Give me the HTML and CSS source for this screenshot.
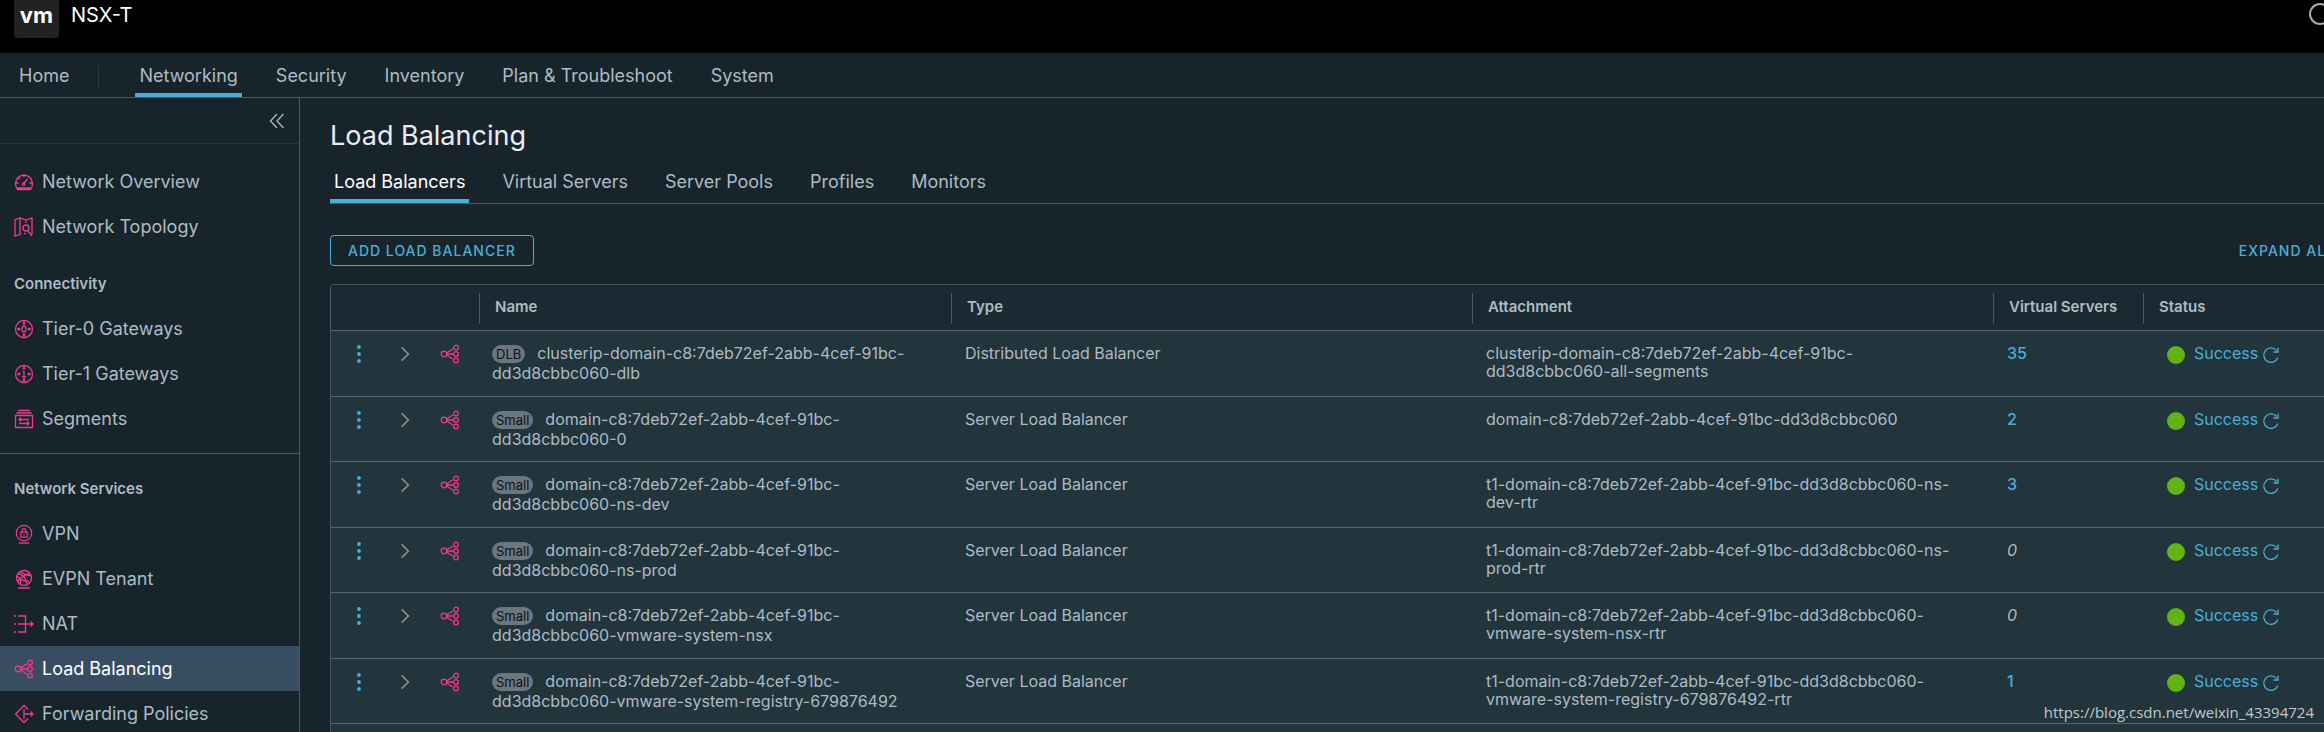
FILE: index.html
```
<!DOCTYPE html>
<html lang="en">
<head>
	<meta charset="UTF-8">
	<title>NSX-T</title>
	<link rel="stylesheet" href="styles.css">
</head>
<body>
	<svg class="sprite" aria-hidden="true">
		<symbol id="i-overview" viewBox="0 0 20 20"><path d="M3.500 17.500C0 13 1 4 10 3c9 1 10 10 6.500 14.500zM3.500 16h13M10 3v2.500M2 11h2.500M15.500 11H18M4.500 5.700l1.500 1.500M9.500 12l4-5"/><circle cx="9.500" cy="12" r="1.200"/></symbol>
		<symbol id="i-topology" viewBox="0 0 20 20"><path d="M7 17l-6 2V3l5-2 6 2 6-2v16M6 1v4M6 5v12M12 3v3M14 14l4 5M12 17l-2-1"/><circle cx="12" cy="11" r="3"/></symbol>
		<symbol id="i-tier0" viewBox="0 0 20 20"><circle cx="10" cy="10" r="8.500"/><ellipse cx="10" cy="10" rx="2" ry="3"/><path d="M10 2v3M8.700 3.700L10 5l1.300-1.300M10 18v-3M8.700 16.300L10 15l1.300 1.300M3 10h3M4.500 8.700L6 10l-1.500 1.300M17 10h-3M15.500 8.700L14 10l1.500 1.300"/></symbol>
		<symbol id="i-tier1" viewBox="0 0 20 20"><circle cx="10" cy="10" r="8.500"/><path d="M8.500 7.500H10V13M8 13h4M10 2v3M8.700 3.700L10 5l1.300-1.300M10 18v-3M8.700 16.300L10 15l1.300 1.300M3 10h3M4.500 8.700L6 10l-1.500 1.300M17 10h-3M15.500 8.700L14 10l1.500 1.300"/></symbol>
		<symbol id="i-segments" viewBox="0 0 20 20"><path d="M4 1.500h12M2.500 4h15M1.500 6.500h17v12h-17zM15 10.500H5M7 8.500l-2 2 2 2M5 14.500h10M13 12.500l2 2-2 2"/></symbol>
		<symbol id="i-vpn" viewBox="0 0 20 22"><circle cx="10" cy="10" r="8.500"/><path d="M6.500 9h7v5.500h-7zM8 9V7a2 2 0 0 1 4 0v2M10 11v1.500M4 21h12"/></symbol>
		<symbol id="i-evpn" viewBox="0 0 20 20"><circle cx="10" cy="9" r="7.500"/><path d="M4.500 4.500C8 5 12 9 13.500 15.500M15.500 4.500C12 5 6 9 3.500 12.500M7 2.500c2 2.500 5 4 10 4M3 7c2 2 7 6 12 5M7 8l-1 8M4 19h12"/></symbol>
		<symbol id="i-nat" viewBox="0 0 20 20"><path d="M4 2h7.500v16H4M4 10h15M16.500 7.500L19 10l-2.500 2.500M0 2h2M0 10h2M0 18h2"/></symbol>
		<symbol id="i-lb" viewBox="0 0 20 20"><circle cx="4" cy="10" r="2.800"/><circle cx="16" cy="3.500" r="2.300"/><circle cx="16" cy="10" r="2.300"/><circle cx="16" cy="16.500" r="2.300"/><path d="M7 10h6.500M6.700 9l6-4M6.700 11l6 4"/></symbol>
		<symbol id="i-forward" viewBox="0 0 20 20"><path d="M14 5.500L10 1.500 1.500 10l8.500 8.500 4-4M10 5v10M10 10h9M16.500 7.500L19 10l-2.500 2.500"/></symbol>
		<symbol id="i-collapse" viewBox="0 0 16 16"><path d="M8 1L1.500 8 8 15M14.500 1L8 8l6.500 7"/></symbol>
		<symbol id="i-dots" viewBox="0 0 18 20"><circle cx="9" cy="3" r="1.900"/><circle cx="9" cy="10" r="1.900"/><circle cx="9" cy="17" r="1.900"/></symbol>
		<symbol id="i-chevron" viewBox="0 0 18 18"><path d="M6 3l6 6-6 6"/></symbol>
		<symbol id="i-refresh" viewBox="0 0 18 18"><path d="M15.800 11.500A7.200 7.200 0 1 1 14.500 4.500M16 1.500V6h-4.500"/></symbol>
	</svg>

	<header class="topbar">
		<a class="logo" href="#">vm</a>
		<span class="product">NSX-T</span>
		<button class="search" aria-label="Search"></button>
	</header>

	<nav class="mainnav">
		<a class="home" href="#">Home</a>
		<a class="active" href="#">Networking</a>
		<a href="#">Security</a>
		<a href="#">Inventory</a>
		<a href="#">Plan &amp; Troubleshoot</a>
		<a href="#">System</a>
	</nav>

	<div class="wrap">
		<aside class="sidebar">
			<div class="fold">
				<button aria-label="Collapse"><svg><use href="#i-collapse"/></svg></button>
			</div>
			<ul class="first">
				<li><a href="#"><svg><use href="#i-overview"/></svg>Network Overview</a></li>
				<li><a href="#"><svg><use href="#i-topology"/></svg>Network Topology</a></li>
			</ul>
			<h4>Connectivity</h4>
			<ul class="line">
				<li><a href="#"><svg><use href="#i-tier0"/></svg>Tier-0 Gateways</a></li>
				<li><a href="#"><svg><use href="#i-tier1"/></svg>Tier-1 Gateways</a></li>
				<li><a href="#"><svg><use href="#i-segments"/></svg>Segments</a></li>
			</ul>
			<h4>Network Services</h4>
			<ul>
				<li><a href="#"><svg><use href="#i-vpn"/></svg>VPN</a></li>
				<li><a href="#"><svg><use href="#i-evpn"/></svg>EVPN Tenant</a></li>
				<li><a href="#"><svg><use href="#i-nat"/></svg>NAT</a></li>
				<li class="active"><a href="#"><svg><use href="#i-lb"/></svg>Load Balancing</a></li>
				<li><a href="#"><svg><use href="#i-forward"/></svg>Forwarding Policies</a></li>
			</ul>
		</aside>

		<main class="content">
			<h1>Load Balancing</h1>
			<div class="tabs">
				<a class="active" href="#">Load Balancers</a>
				<a href="#">Virtual Servers</a>
				<a href="#">Server Pools</a>
				<a href="#">Profiles</a>
				<a href="#">Monitors</a>
			</div>
			<div class="toolbar">
				<button class="add">ADD LOAD BALANCER</button>
				<button class="expand">EXPAND ALL</button>
			</div>
			<table class="grid">
				<colgroup>
					<col class="c-menu"><col class="c-open"><col class="c-icon"><col class="c-name"><col><col><col class="c-vs"><col class="c-status">
				</colgroup>
				<thead>
					<tr>
						<td colspan="3"></td>
						<th>Name</th>
						<th>Type</th>
						<th>Attachment</th>
						<th>Virtual Servers</th>
						<th>Status</th>
					</tr>
				</thead>
				<tbody>
					<tr>
						<td><button class="dots" aria-label="Actions"><svg><use href="#i-dots"/></svg></button></td>
						<td><button class="open" aria-label="Expand"><svg><use href="#i-chevron"/></svg></button></td>
						<td><svg class="lb"><use href="#i-lb"/></svg></td>
						<td class="name"><span class="size">DLB</span>clusterip-domain-c8:7deb72ef-2abb-4cef-91bc-dd3d8cbbc060-dlb</td>
						<td>Distributed Load Balancer</td>
						<td>clusterip-domain-c8:7deb72ef-2abb-4cef-91bc-dd3d8cbbc060-all-segments</td>
						<td><a class="num" href="#">35</a></td>
						<td class="status"><a href="#">Success</a><button aria-label="Refresh"><svg><use href="#i-refresh"/></svg></button></td>
					</tr>
					<tr>
						<td><button class="dots" aria-label="Actions"><svg><use href="#i-dots"/></svg></button></td>
						<td><button class="open" aria-label="Expand"><svg><use href="#i-chevron"/></svg></button></td>
						<td><svg class="lb"><use href="#i-lb"/></svg></td>
						<td class="name"><span class="size">Small</span>domain-c8:7deb72ef-2abb-4cef-91bc-dd3d8cbbc060-0</td>
						<td>Server Load Balancer</td>
						<td>domain-c8:7deb72ef-2abb-4cef-91bc-dd3d8cbbc060</td>
						<td><a class="num" href="#">2</a></td>
						<td class="status"><a href="#">Success</a><button aria-label="Refresh"><svg><use href="#i-refresh"/></svg></button></td>
					</tr>
					<tr>
						<td><button class="dots" aria-label="Actions"><svg><use href="#i-dots"/></svg></button></td>
						<td><button class="open" aria-label="Expand"><svg><use href="#i-chevron"/></svg></button></td>
						<td><svg class="lb"><use href="#i-lb"/></svg></td>
						<td class="name"><span class="size">Small</span>domain-c8:7deb72ef-2abb-4cef-91bc-dd3d8cbbc060-ns-dev</td>
						<td>Server Load Balancer</td>
						<td>t1-domain-c8:7deb72ef-2abb-4cef-91bc-dd3d8cbbc060-ns-dev-rtr</td>
						<td><a class="num" href="#">3</a></td>
						<td class="status"><a href="#">Success</a><button aria-label="Refresh"><svg><use href="#i-refresh"/></svg></button></td>
					</tr>
					<tr>
						<td><button class="dots" aria-label="Actions"><svg><use href="#i-dots"/></svg></button></td>
						<td><button class="open" aria-label="Expand"><svg><use href="#i-chevron"/></svg></button></td>
						<td><svg class="lb"><use href="#i-lb"/></svg></td>
						<td class="name"><span class="size">Small</span>domain-c8:7deb72ef-2abb-4cef-91bc-dd3d8cbbc060-ns-prod</td>
						<td>Server Load Balancer</td>
						<td>t1-domain-c8:7deb72ef-2abb-4cef-91bc-dd3d8cbbc060-ns-prod-rtr</td>
						<td><i>0</i></td>
						<td class="status"><a href="#">Success</a><button aria-label="Refresh"><svg><use href="#i-refresh"/></svg></button></td>
					</tr>
					<tr>
						<td><button class="dots" aria-label="Actions"><svg><use href="#i-dots"/></svg></button></td>
						<td><button class="open" aria-label="Expand"><svg><use href="#i-chevron"/></svg></button></td>
						<td><svg class="lb"><use href="#i-lb"/></svg></td>
						<td class="name"><span class="size">Small</span>domain-c8:7deb72ef-2abb-4cef-91bc-dd3d8cbbc060-vmware-system-nsx</td>
						<td>Server Load Balancer</td>
						<td>t1-domain-c8:7deb72ef-2abb-4cef-91bc-dd3d8cbbc060-vmware-system-nsx-rtr</td>
						<td><i>0</i></td>
						<td class="status"><a href="#">Success</a><button aria-label="Refresh"><svg><use href="#i-refresh"/></svg></button></td>
					</tr>
					<tr>
						<td><button class="dots" aria-label="Actions"><svg><use href="#i-dots"/></svg></button></td>
						<td><button class="open" aria-label="Expand"><svg><use href="#i-chevron"/></svg></button></td>
						<td><svg class="lb"><use href="#i-lb"/></svg></td>
						<td class="name"><span class="size">Small</span>domain-c8:7deb72ef-2abb-4cef-91bc-dd3d8cbbc060-vmware-system-registry-679876492</td>
						<td>Server Load Balancer</td>
						<td>t1-domain-c8:7deb72ef-2abb-4cef-91bc-dd3d8cbbc060-vmware-system-registry-679876492-rtr</td>
						<td><a class="num" href="#">1</a></td>
						<td class="status"><a href="#">Success</a><button aria-label="Refresh"><svg><use href="#i-refresh"/></svg></button></td>
					</tr>
				</tbody>
			</table>
			<div class="more"></div>
		</main>
	</div>
	<div class="mark">https://blog.csdn.net/weixin_43394724</div>
</body>
</html>
```
FILE: styles.css
```
*{
	box-sizing: border-box;
}
body{
	margin: 0;
	height: 100vh;
	display: flex;
	flex-direction: column;
	overflow: hidden;
	position: relative;
	background: #18242b;
	color: #adbbc4;
	font-family: Inter, "Liberation Sans", sans-serif;
	font-size: 16px;
}
a{
	color: inherit;
	text-decoration: none;
}
ul{
	margin: 0;
	padding: 0;
	list-style: none;
}
button{
	padding: 0;
	border: none;
	background: none;
	color: inherit;
	font-family: inherit;
	cursor: pointer;
}
svg{
	display: block;
	width: 20px;
	height: 20px;
	fill: none;
	stroke: currentColor;
	stroke-width: 1.3;
}
.sprite{
	display: none;
}

/* top bar */
.topbar{
	height: 53px;
	flex: none;
	display: flex;
	align-items: flex-start;
	padding-left: 14px;
	background: #000;
	color: #fff;
	overflow: hidden;
}
.logo{
	width: 45px;
	height: 38px;
	border-radius: 0 0 4px 4px;
	background: #222;
	font-size: 22px;
	font-weight: 700;
	line-height: 30px;
	text-align: center;
}
.product{
	margin-left: 12px;
	font-size: 20px;
	line-height: 30px;
}
.search{
	width: 22px;
	height: 22px;
	flex: none;
	margin: 3px -7px 0 auto;
	border: 2px solid #aaa;
	border-radius: 50%;
}

/* main menu */
.mainnav{
	height: 45px;
	flex: none;
	display: flex;
	gap: 30px;
	padding-left: 15px;
	border-bottom: 1px solid #495a66;
	font-size: 18px;
	line-height: 45px;
}
.mainnav a{
	padding: 0 4px;
}
.mainnav .active{
	box-shadow: inset 0 -4px #49afd9;
}
.mainnav .home{
	position: relative;
	margin-right: 32px;
}
.home::after{
	content: "";
	position: absolute;
	right: -26px;
	top: 13px;
	height: 22px;
	border-right: 1px solid #2b3a43;
}

.wrap{
	flex: 1;
	min-height: 0;
	display: flex;
}

/* left menu */
.sidebar{
	width: 300px;
	flex: none;
	border-right: 1px solid #495a66;
	font-size: 18px;
}
.fold{
	height: 46px;
	display: flex;
	justify-content: flex-end;
	align-items: center;
	padding-right: 14px;
	border-bottom: 1px solid #26333b;
}
.fold svg{
	width: 16px;
	height: 16px;
}
.first{
	padding-top: 15px;
}
.line{
	padding-bottom: 12px;
	border-bottom: 1px solid #495a66;
}
.sidebar h4{
	margin: 0;
	padding: 24px 14px 11px;
	font-size: 15px;
	font-weight: 600;
	line-height: 22px;
}
.sidebar li a{
	display: flex;
	align-items: center;
	gap: 8px;
	height: 45px;
	padding-left: 14px;
}
.sidebar li svg{
	color: #f0398c;
}
.sidebar .active{
	background: #384d61;
	color: #fff;
}

/* content */
.content{
	flex: 1;
	min-width: 0;
	overflow: hidden;
	padding: 18px 0 0 30px;
}
h1{
	margin: 0;
	color: #eaedf0;
	font-size: 27px;
	font-weight: 400;
	line-height: 40px;
}
.tabs{
	display: flex;
	gap: 29px;
	height: 48px;
	border-bottom: 1px solid #495a66;
	font-size: 18px;
	line-height: 52px;
}
.tabs a{
	padding: 0 4px;
}
.tabs .active{
	color: #fff;
	box-shadow: inset 0 -4px #49afd9;
}
.toolbar{
	display: flex;
	justify-content: space-between;
	align-items: center;
	margin: 31px -11px 18px 0;
	color: #49afd9;
}
.add,.expand{
	height: 31px;
	font-size: 14px;
	font-weight: 500;
	letter-spacing: 1px;
	white-space: nowrap;
}
.add{
	padding: 0 17px;
	border: 1px solid #49afd9;
	border-radius: 4px;
}

/* table */
.grid{
	width: calc(100% + 60px);
	table-layout: fixed;
	border-collapse: separate;
	border-spacing: 0;
	border: 1px solid #495a66;
	border-bottom: none;
	border-radius: 4px 0 0 0;
	background: #22343c;
}
.c-menu,.c-open{
	width: 46px;
}
.c-icon{
	width: 56px;
}
.c-name{
	width: 23%;
}
.c-vs{
	width: 150px;
}
.c-status{
	width: 240px;
}
.grid thead{
	background: #1b2a32;
}
.grid thead tr{
	height: 46px;
}
.grid th{
	position: relative;
	padding: 0 16px 2px;
	border-bottom: 1px solid #566772;
	font-size: 15px;
	font-weight: 600;
	text-align: left;
	white-space: nowrap;
}
.grid thead td{
	border-bottom: 1px solid #566772;
}
.grid th::before{
	content: "";
	position: absolute;
	left: 0;
	top: 8px;
	height: 31px;
	border-left: 1px solid #495a66;
}
.grid tbody tr{
	height: 65px;
}
.grid tbody tr:nth-child(odd){
	height: 66px;
}
.grid tbody td{
	padding: 13px 20px 0 14px;
	border-bottom: 1px solid #566772;
	line-height: 18px;
	vertical-align: top;
}
.grid tbody .name{
	padding: 12px 12px 0 13px;
	line-height: 20px;
}
.size{
	display: inline-block;
	margin-right: 12px;
	padding: 0 4px;
	border-radius: 9px;
	background: #6a7682;
	color: #111;
	font-size: 13px;
	line-height: 18px;
}
.dots{
	color: #49afd9;
}
.dots svg{
	width: 28px;
	fill: currentColor;
	stroke: none;
}
.open{
	color: #8b8f92;
}
.open svg{
	width: 28px;
	stroke-width: 1.500;
}
.grid .lb{
	margin-left: 3px;
	color: #f0398c;
}
.num,.status{
	color: #49afd9;
}
.num{
	font-weight: 500;
}
.status::before{
	content: "";
	display: inline-block;
	width: 18px;
	height: 18px;
	margin: 0 9px 0 10px;
	border-radius: 50%;
	background: #60b515;
	vertical-align: -5px;
}
.status button{
	display: inline-block;
	margin-left: 4px;
	vertical-align: -5px;
}
.status svg{
	width: 18px;
	height: 18px;
}
.more{
	height: 20px;
	border-left: 1px solid #495a66;
	background: #22343c;
}
.mark{
	position: absolute;
	right: 10px;
	bottom: 8px;
	color: #c3c8cb;
	font-family: "Open Sans", sans-serif;
	font-size: 15px;
	line-height: 24px;
}
```
